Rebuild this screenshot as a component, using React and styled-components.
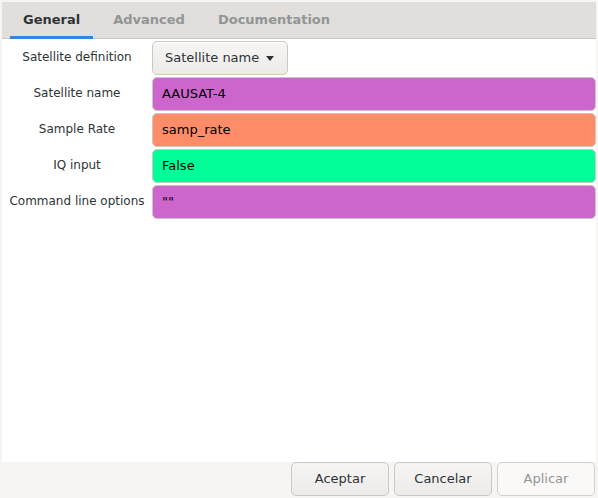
import React from 'react';
import styled, { createGlobalStyle } from 'styled-components';

const GlobalStyle = createGlobalStyle`
  html, body {
    margin: 0;
    padding: 0;
    background: #f6f5f4;
  }
  * {
    box-sizing: border-box;
  }
`;

const params = [
  { label: 'Satellite name', value: 'AAUSAT-4', color: '#cc66cc' },
  { label: 'Sample Rate', value: 'samp_rate', color: '#ff8c69' },
  { label: 'IQ input', value: 'False', color: '#00ff99' },
  { label: 'Command line options', value: '""', color: '#cc66cc' },
];

const tabs = ['General', 'Advanced', 'Documentation'];

export default function App() {
  return (
    <>
      <GlobalStyle />
      <Window>
        <Notebook>
          <TabBar>
            {tabs.map((t, i) => (
              <Tab key={t} active={i === 0}>
                {t}
              </Tab>
            ))}
          </TabBar>
          <Page>
            <Form>
              <Label>Satellite definition</Label>
              <ComboButton>
                Satellite name
                <Arrow viewBox="0 0 8 5">
                  <path d="M0 0h8L4 5z" fill="#2e3436" />
                </Arrow>
              </ComboButton>
              {params.map((p) => (
                <React.Fragment key={p.label}>
                  <Label>{p.label}</Label>
                  <Entry color={p.color}>{p.value}</Entry>
                </React.Fragment>
              ))}
            </Form>
          </Page>
        </Notebook>
        <ButtonBar>
          <Button>Aceptar</Button>
          <Button>Cancelar</Button>
          <Button disabled>Aplicar</Button>
        </ButtonBar>
      </Window>
    </>
  );
}

const Window = styled.div`
  width: 598px;
  height: 498px;
  display: flex;
  flex-direction: column;
  background: #f6f5f4;
  font-family: 'DejaVu Sans', sans-serif;
  overflow: hidden;
`;

const Notebook = styled.div`
  flex: 1;
  display: flex;
  flex-direction: column;
  margin: 2px 2px 0 2px;
  background: #ffffff;
`;

const TabBar = styled.div`
  height: 37px;
  display: flex;
  gap: 7px;
  padding-left: 8px;
  background: #e1dedb;
  border-bottom: 1px solid #cdc7c2;
`;

const Tab = styled.div`
  padding: 0 13px 3px;
  display: flex;
  align-items: center;
  font-size: 13px;
  font-weight: bold;
  color: ${(p) => (p.active ? '#2e3436' : '#929595')};
  box-shadow: ${(p) => (p.active ? 'inset 0 -3px 0 #3584e4' : 'none')};
  margin-bottom: -1px;
`;

const Page = styled.div`
  flex: 1;
  padding: 2px 0 0 0;
`;

const Form = styled.div`
  display: grid;
  grid-template-columns: 150px 1fr;
  grid-auto-rows: 34px;
  row-gap: 2px;
`;

const Label = styled.div`
  display: flex;
  align-items: center;
  justify-content: center;
  padding-bottom: 2px;
  font-size: 12px;
  color: #2e3436;
  white-space: nowrap;
`;

const ComboButton = styled.div`
  justify-self: start;
  display: flex;
  align-items: center;
  gap: 7px;
  padding: 0 13px 2px 12px;
  font-size: 13px;
  color: #2e3436;
  background: linear-gradient(#f6f5f4, #edebe9);
  border: 1px solid #cdc7c2;
  border-radius: 5px;
  box-shadow: inset 0 1px #ffffff;
`;

const Arrow = styled.svg`
  width: 8px;
  height: 5px;
  margin-top: 2px;
`;

const Entry = styled.div`
  display: flex;
  align-items: center;
  padding: 0 9px 2px;
  font-size: 13px;
  color: #000000;
  background: ${(p) => p.color};
  border: 1px solid #cdc7c2;
  border-radius: 5px;
`;

const ButtonBar = styled.div`
  height: 36px;
  display: flex;
  justify-content: flex-end;
  gap: 5px;
  padding: 0 3px 2px 0;
`;

const Button = styled.div`
  width: 98px;
  display: flex;
  align-items: center;
  justify-content: center;
  padding-bottom: 1px;
  font-size: 13px;
  color: ${(p) => (p.disabled ? '#929595' : '#2e3436')};
  background: ${(p) =>
    p.disabled ? '#faf9f8' : 'linear-gradient(#f6f5f4, #edebe9)'};
  border: 1px solid ${(p) => (p.disabled ? '#d5d0cc' : '#cdc7c2')};
  border-radius: 5px;
`;
